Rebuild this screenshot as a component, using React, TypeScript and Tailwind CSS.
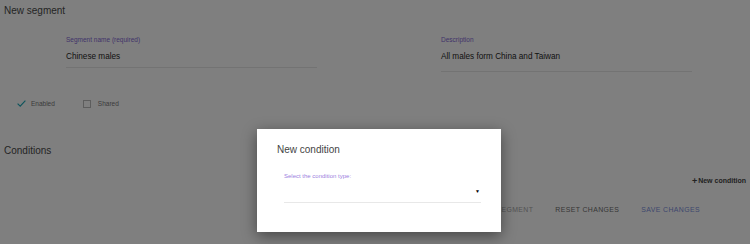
import React from "react";

const Field = ({ label, value, lineGap }: { label: string; value: string; lineGap: string }) => (
  <div className="pl-[66px]">
    <div className="w-[251px]">
      <label className="block text-[6.5px] leading-[8px] text-[#8468d4]">{label}</label>
      <div className={`mt-[7px] text-[8.2px] leading-[11px] text-[#262626] ${lineGap}`}>{value}</div>
      <div className="h-px bg-[#e6e6e6]" />
    </div>
  </div>
);

const App = () => {
  return (
    <div className="relative h-[244px] w-[750px] overflow-hidden bg-white font-['Liberation_Sans',Arial,sans-serif]">
      {/* page */}
      <div className="pt-[4px]">
        <h1 className="pl-[4px] text-[10px] leading-[14px] text-[#4a4a4a]">New segment</h1>

        <div className="mt-[18px] grid grid-cols-2">
          <Field label="Segment name (required)" value="Chinese males" lineGap="pb-[5px]" />
          <Field label="Description" value="All males form China and Taiwan" lineGap="pb-[9px]" />
        </div>

        <div className="mt-[27px] flex items-center pl-[17px] text-[6.5px] text-[#777]">
          <svg width="9" height="7" viewBox="0 0 9 7" fill="none" className="mr-[5px]">
            <path d="M0.6 3.6 L3.2 6.1 L8.4 0.7" stroke="#1fa9b9" strokeWidth="1.2" />
          </svg>
          <span>Enabled</span>
          <span className="ml-[28px] mr-[7px] h-[8px] w-[8px] border border-[#bbb]" />
          <span>Shared</span>
        </div>

        <h2 className="mt-[35px] pl-[4px] text-[10px] leading-[14px] text-[#4a4a4a]">Conditions</h2>

        <div className="mt-[18px] flex justify-end pr-[4px]">
          <button className="flex items-center gap-[1px] text-[7px] font-bold text-[#444]">
            <span className="text-[9px] leading-[8px]">+</span>New condition
          </button>
        </div>

        <div className="mt-[19px] flex justify-end gap-[22px] pr-[50px] text-[6.9px] tracking-[0.4px]">
          <button className="text-[#a8a8a8]">DELETE SEGMENT</button>
          <button className="text-[#6e6e6e]">RESET CHANGES</button>
          <button className="text-[#7d8fdc]">SAVE CHANGES</button>
        </div>
      </div>

      {/* overlay */}
      <div className="absolute inset-0 bg-black/50" />

      {/* dialog */}
      <div className="absolute left-[257px] top-[129px] h-[103px] w-[244px] bg-white px-[20px] pt-[14px] shadow-[0_4px_14px_rgba(0,0,0,0.45)]">
        <h3 className="text-[10px] leading-[14px] text-[#444]">New condition</h3>
        <div className="ml-[7px] mt-[15px] w-[197px]">
          <label className="block text-[6px] leading-[8px] text-[#9b7fe0]">Select the condition type:</label>
          <div className="flex h-[22px] items-center justify-end pr-[1px]">
            <span className="text-[5px] leading-[5px] text-black">▼</span>
          </div>
          <div className="h-px bg-[#e8e8e8]" />
        </div>
      </div>
    </div>
  );
};

export default App;
